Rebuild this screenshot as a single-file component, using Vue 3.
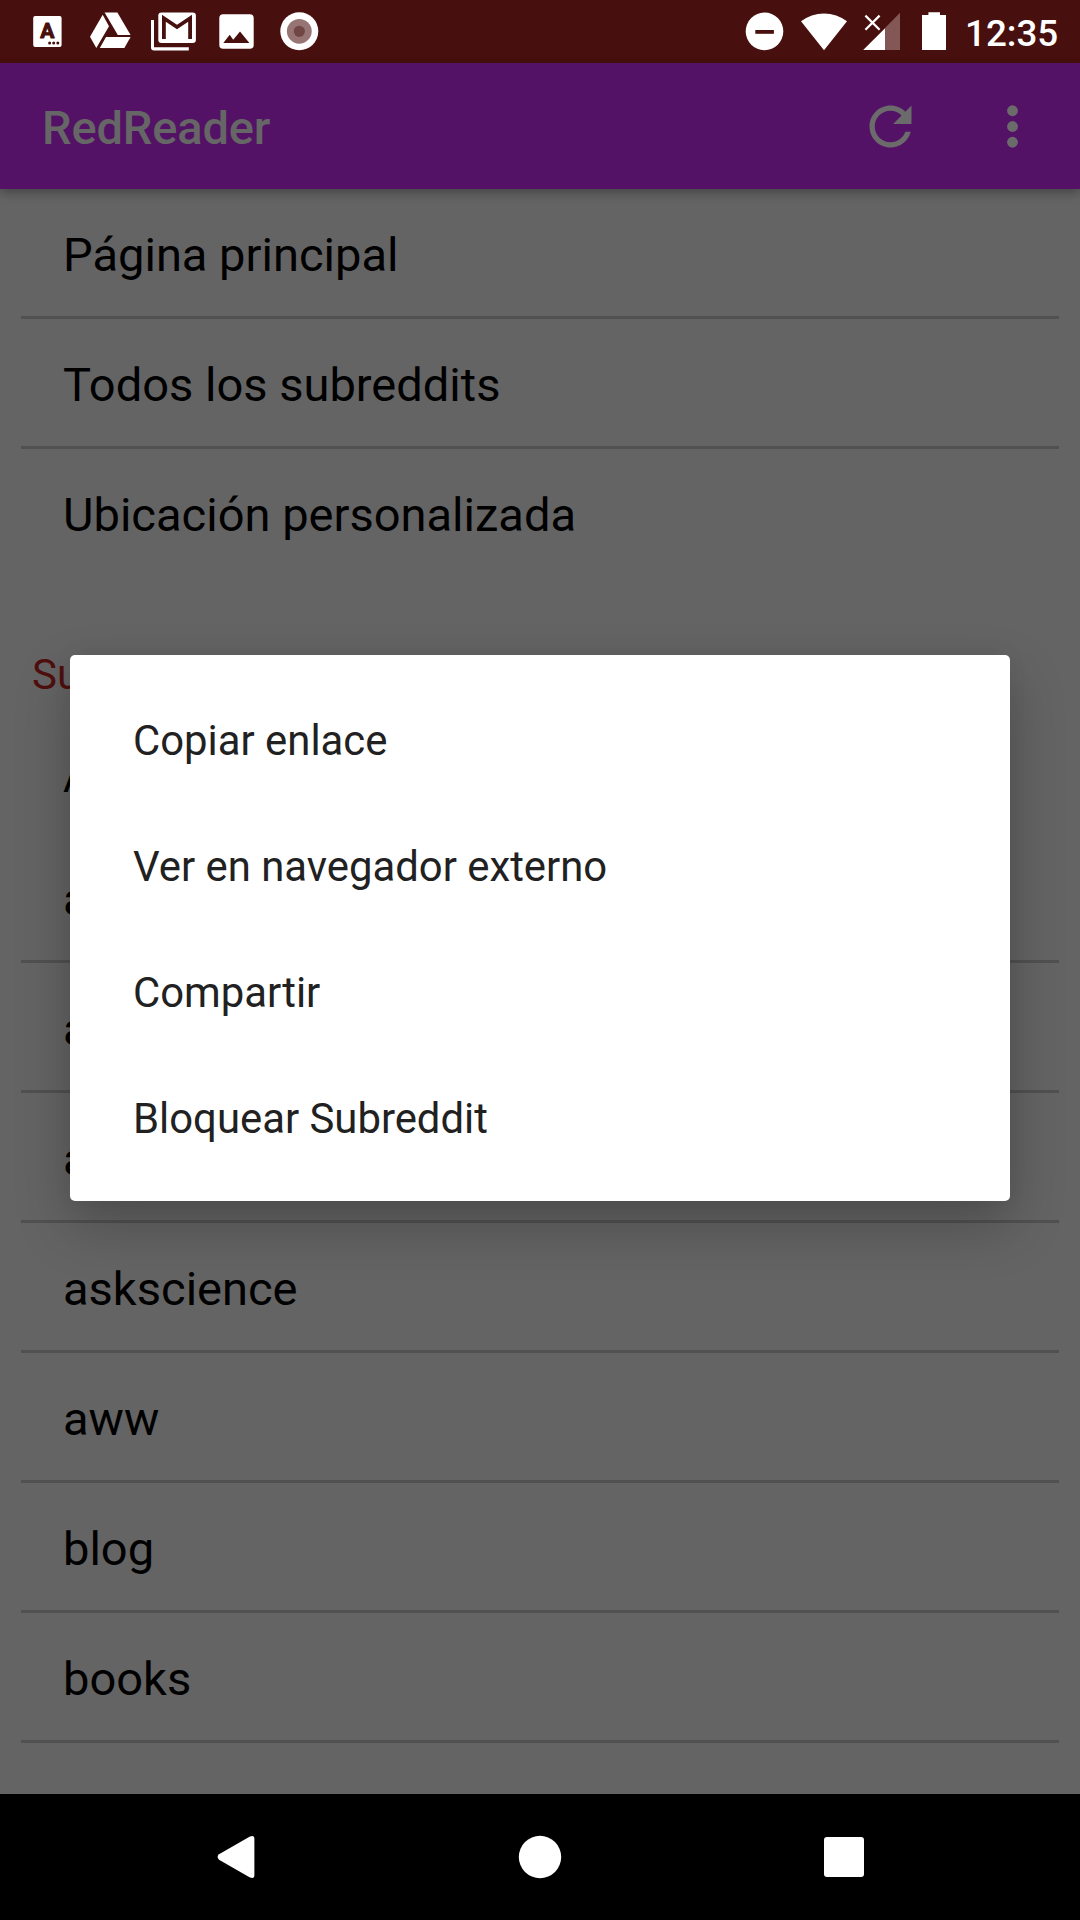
<script setup>
const places = ['Página principal', 'Todos los subreddits', 'Ubicación personalizada']
const subreddits = ['announcements', 'art', 'askreddit', 'askscience', 'aww', 'blog', 'books']
const actions = ['Copiar enlace', 'Ver en navegador externo', 'Compartir', 'Bloquear Subreddit']
</script>

<template>
  <div class="screen">
    <header class="status">
      <svg class="notifications" width="340" height="63" viewBox="0 0 340 63" fill="#fff">
        <rect x="33.2" y="16" width="28.4" height="31" rx="2" />
        <text x="47.3" y="38.3" class="letter" text-anchor="middle">A</text>
        <g fill="#470f0d">
          <circle cx="49.6" cy="43" r="1.5" />
          <circle cx="53.7" cy="43" r="1.5" />
          <circle cx="57.8" cy="43" r="1.5" />
        </g>
        <path d="M102.7 14.7L109 26.2 96.3 48 90 36.7z" />
        <path d="M104.6 12.4h12.8L130.6 35h-12.8z" />
        <path d="M106 37h24.6l-6.2 11H99.8z" />
        <rect x="158.3" y="12.4" width="37.6" height="30.6" rx="3.2" />
        <path d="M151 20h3v27.3h34.8v3.1H154a3 3 0 0 1-3-3z" />
        <path d="M163.9 39V18.2L177 27l13.1-8.8V39" fill="none" stroke="#470f0d" stroke-width="3.8" />
        <rect x="219.3" y="14.3" width="34.4" height="34.4" rx="3.8" />
        <path d="M223.3 43l6.4-8.3 3.5 5 6.8-8.3 9.4 11.6z" fill="#470f0d" />
        <circle cx="299.3" cy="31.3" r="19" />
        <circle cx="299.3" cy="31.3" r="12.4" fill="#977575" />
        <circle cx="299.3" cy="31.3" r="5.6" fill="#704745" />
      </svg>
      <div class="system">
        <svg width="220" height="63" viewBox="740 0 220 63" fill="#fff">
          <circle cx="764.5" cy="31.4" r="18.8" />
          <rect x="755.3" y="30" width="18.6" height="3.8" fill="#470f0d" />
          <path d="M824 50.2L801 21.3a37.5 37.5 0 0 1 46 0z" />
          <path d="M900 12.8V50h-15V28z" fill="#835756" />
          <path d="M863.2 50L885 28.2V50z" />
          <path d="M865.4 15.6l14.2 14.2M879.6 15.6l-14.2 14.2" stroke="#fff" stroke-width="2.2" />
          <path d="M928.4 12.2H940V15h6v35h-24V15h6.4z" />
        </svg>
        <span class="clock">12:35</span>
      </div>
    </header>

    <div class="appbar">
      <h1>RedReader</h1>
      <div class="tools">
        <svg width="63" height="63" viewBox="0 0 24 24" fill="#6b6b6b">
          <path d="M17.65 6.35C16.2 4.9 14.21 4 12 4c-4.42 0-7.99 3.58-7.99 8s3.57 8 7.99 8c3.73 0 6.84-2.55 7.73-6h-2.08c-.82 2.33-3.04 4-5.65 4-3.31 0-6-2.69-6-6s2.69-6 6-6c1.66 0 3.14.69 4.22 1.78L13 11h7V4l-2.35 2.35z" />
        </svg>
        <svg width="63" height="63" viewBox="0 0 24 24" fill="#6b6b6b">
          <circle cx="12" cy="6" r="2.06" />
          <circle cx="12" cy="12" r="2.06" />
          <circle cx="12" cy="18" r="2.06" />
        </svg>
      </div>
    </div>

    <main>
      <ul class="list places">
        <li v-for="p in places" :key="p">{{ p }}</li>
      </ul>
      <h2>Subreddits</h2>
      <p class="all">All</p>
      <ul class="list">
        <li v-for="s in subreddits" :key="s">{{ s }}</li>
      </ul>
    </main>

    <nav class="navbar">
      <svg width="1080" height="126" viewBox="0 0 1080 126" fill="#fff">
        <path d="M219 60.3L249.5 42.7Q254.4 40.5 254.4 45V81Q254.4 85.5 249.5 83.3L219 65.7Q216.2 63 219 60.3z" />
        <circle cx="540" cy="63" r="21.2" />
        <rect x="824" y="43" width="40" height="40" rx="3" />
      </svg>
    </nav>

    <div class="dialog">
      <button v-for="a in actions" :key="a">{{ a }}</button>
    </div>
  </div>
</template>

<style>
body {
  margin: 0;
}
</style>

<style scoped>
.screen {
  position: relative;
  display: flex;
  flex-direction: column;
  width: 1080px;
  height: 1920px;
  overflow: hidden;
  background: #646464;
  font-family: Roboto, "Noto Sans", sans-serif;
  color: #000;
}
.status {
  display: flex;
  justify-content: space-between;
  height: 63px;
  flex: none;
  background: #470f0d;
  color: #fff;
}
.letter {
  font: 700 21px Roboto, sans-serif;
  fill: #470f0d;
  stroke: #470f0d;
  stroke-width: 1;
  stroke-linejoin: round;
}
.system {
  display: flex;
  width: 340px;
}
.clock {
  margin-left: 5px;
  font-size: 36.75px;
  font-weight: 500;
  line-height: 67px;
}
.appbar {
  position: relative;
  display: flex;
  align-items: center;
  justify-content: space-between;
  flex: none;
  height: 126px;
  padding: 0 36px 0 42px;
  box-sizing: border-box;
  background: #541267;
  box-shadow: 0 4px 10px rgba(0, 0, 0, 0.3);
}
h1 {
  margin: 0;
  padding-top: 2px;
  font-size: 47px;
  font-weight: 500;
  letter-spacing: -0.15px;
  color: #666;
}
.tools {
  display: flex;
  gap: 59px;
}
main {
  flex: 1;
  min-height: 0;
  overflow: hidden;
}
.list {
  margin: 0;
  padding: 0 21px;
  list-style: none;
}
.list li {
  box-sizing: border-box;
  height: 130px;
  padding: 4px 42px 0;
  border-bottom: 3px solid #515151;
  font-size: 47.05px;
  line-height: 123px;
}
.places li:last-child {
  height: 127px;
  border-bottom: 0;
}
h2 {
  margin: 0;
  padding: 74px 32px 0;
  font-size: 42px;
  font-weight: 400;
  line-height: 50px;
  color: #4f0f0f;
}
.all {
  margin: 0;
  height: 133px;
  padding: 53px 63px 0;
  box-sizing: border-box;
  font-size: 42px;
  line-height: 50px;
}
.navbar {
  flex: none;
  height: 126px;
  background: #000;
}
.navbar svg {
  display: block;
}
.dialog {
  position: absolute;
  top: 655px;
  left: 70px;
  width: 940px;
  height: 546px;
  box-sizing: border-box;
  padding: 21px 0;
  display: flex;
  flex-direction: column;
  background: #fff;
  border-radius: 5px;
  box-shadow: 0 24px 56px rgba(0, 0, 0, 0.24), 0 0 20px rgba(0, 0, 0, 0.05);
}
.dialog button {
  height: 126px;
  padding: 2px 63px 0;
  border: 0;
  background: none;
  text-align: left;
  font: 400 41.85px Roboto, "Noto Sans", sans-serif;
  color: #212121;
}
</style>
